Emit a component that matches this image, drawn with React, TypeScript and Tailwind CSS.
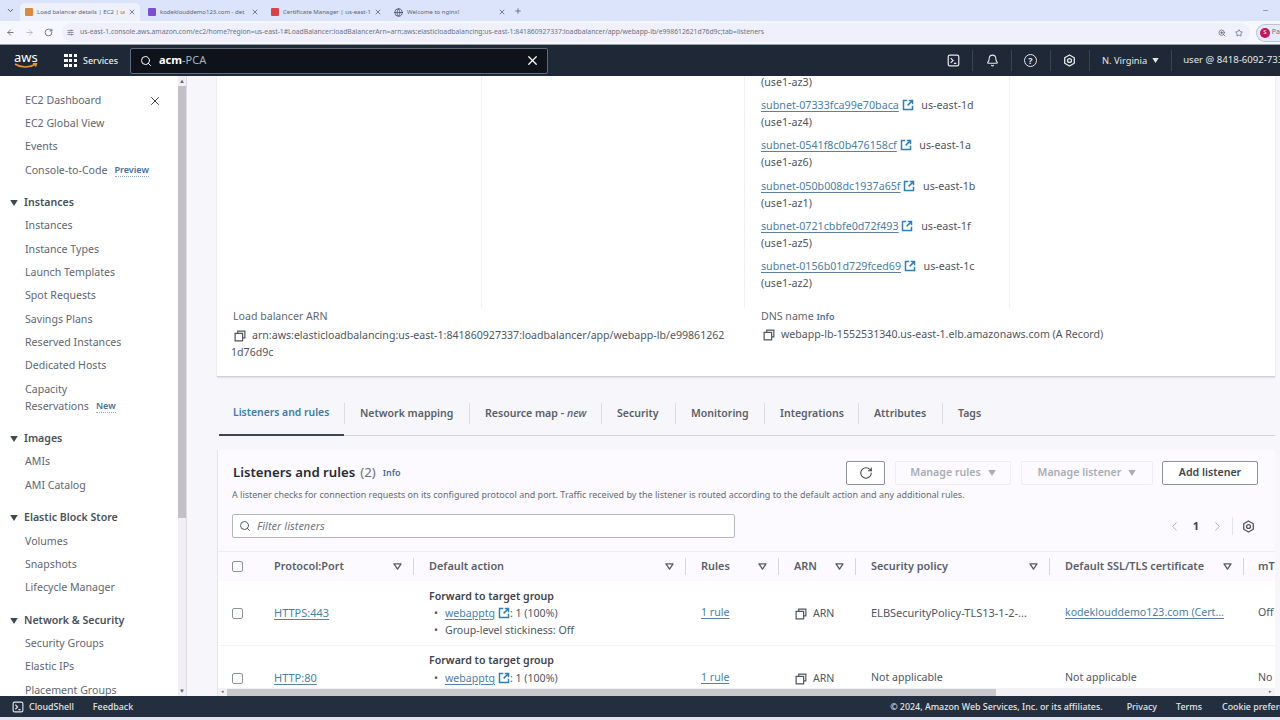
import { ArrowLeft, ArrowRight, RotateCw, X, Plus, Search, Star, ZoomIn, ChevronDown, ChevronLeft, ChevronRight, Globe, Bell, Minus, SlidersHorizontal } from "lucide-react";

const TABS = [
  { title: "Load balancer details | EC2 | us", color: "bg-[#d98a3d]", width: "w-[120px] pl-[5px]", active: true },
  { title: "kodeklouddemo123.com - det", color: "bg-[#7b4fd0]", width: "w-[123px] pl-[8px]" },
  { title: "Certificate Manager | us-east-1", color: "bg-[#d8434a]", width: "w-[123px] pl-[8px]" },
  { title: "Welcome to nginx!", color: "", width: "w-[124px] pl-[8px]", globe: true },
];

const SECTIONS = [
  { items: ["EC2 Dashboard", "EC2 Global View", "Events", "Console-to-Code"] },
  {
    title: "Instances",
    items: ["Instances", "Instance Types", "Launch Templates", "Spot Requests", "Savings Plans", "Reserved Instances", "Dedicated Hosts", "Capacity"],
  },
  { title: "Images", items: ["AMIs", "AMI Catalog"] },
  { title: "Elastic Block Store", items: ["Volumes", "Snapshots", "Lifecycle Manager"] },
  { title: "Network & Security", items: ["Security Groups", "Elastic IPs", "Placement Groups"] },
];

const SUBNETS = [
  { id: "subnet-07333fca99e70baca", zone: "us-east-1d", az: "(use1-az4)" },
  { id: "subnet-0541f8c0b476158cf", zone: "us-east-1a", az: "(use1-az6)" },
  { id: "subnet-050b008dc1937a65f", zone: "us-east-1b", az: "(use1-az1)" },
  { id: "subnet-0721cbbfe0d72f493", zone: "us-east-1f", az: "(use1-az5)" },
  { id: "subnet-0156b01d729fced69", zone: "us-east-1c", az: "(use1-az2)" },
];

const DETAIL_TABS = [
  { label: "Network mapping", width: "w-[125px]" },
  { label: "Resource map", width: "w-[132px]", extra: true },
  { label: "Security", width: "w-[74px]" },
  { label: "Monitoring", width: "w-[89px]" },
  { label: "Integrations", width: "w-[94px]" },
  { label: "Attributes", width: "w-[84px]" },
  { label: "Tags", width: "w-[60px]", last: true },
];

const COLUMNS = ["Protocol:Port", "Default action", "Rules", "ARN", "Security policy", "Default SSL/TLS certificate"];

const GRID = "grid grid-cols-[41px_155px_272px_93px_77px_194px_194px_31px]";

function External() {
  return (
    <svg viewBox="0 0 16 16" className="inline-block w-[12px] h-[12px] align-[-2px] text-[#2f7fb5]" fill="none" stroke="currentColor" strokeWidth="2">
      <path d="M7 2H2v12h12V9" />
      <path d="M9 2h5v5M14 2 7.5 8.5" />
    </svg>
  );
}

function CopyIcon() {
  return (
    <svg viewBox="0 0 16 16" className="inline-block w-[12px] h-[12px] shrink-0 text-[#4f565f]" fill="none" stroke="currentColor" strokeWidth="1.6">
      <path d="M5 4.5V1.5h9.5v9H11.5" />
      <path d="M1.5 4.5h10v10h-10z" />
    </svg>
  );
}

function ShellIcon({ size }: { size: string }) {
  return (
    <svg viewBox="0 0 16 16" className={size} fill="none" stroke="currentColor" strokeWidth="1.5">
      <rect x="1.5" y="1.5" width="13" height="13" rx="2" />
      <path d="m4.5 5 3 3-3 3M8.5 11.5h3" />
    </svg>
  );
}

function GearIcon({ className }: { className: string }) {
  return (
    <svg viewBox="0 0 16 16" className={className} fill="none" stroke="currentColor" strokeWidth="1.6">
      <path d="M8 1.2 13.9 4.600v6.800L8 14.800 2.100 11.400V4.600z" strokeLinejoin="round" />
      <circle cx="8" cy="8" r="2.400" />
    </svg>
  );
}

function SortIcon() {
  return (
    <svg viewBox="0 0 10 8" className="w-[9px] h-[7px] text-[#545b64]" fill="none" stroke="currentColor" strokeWidth="1.500">
      <path d="M1 1h8L5 7z" strokeLinejoin="round" />
    </svg>
  );
}

function Caret({ className }: { className: string }) {
  return (
    <svg viewBox="0 0 10 8" className={className} fill="currentColor">
      <path d="M0 0h10L5 8z" />
    </svg>
  );
}

function Checkbox() {
  return <div className="w-[11px] h-[11px] rounded-[2px] border border-[#8d9299] bg-white" />;
}

function LinkText({ children }: { children: React.ReactNode }) {
  return <span className="text-[#4a7fa6] underline underline-offset-2 decoration-[#5b7f9c]">{children}</span>;
}

function BrowserChrome() {
  return (
    <>
      <div className="h-[21px] bg-[#dbe4fb] flex items-center shrink-0 text-[#4b5563]">
        <div className="w-[20px] flex justify-center">
          <ChevronDown size={9} strokeWidth={2.500} />
        </div>
        {TABS.map((t) => (
          <div
            key={t.title}
            className={`${t.width} h-[18px] mt-[3px] pr-[4px] flex items-center gap-[3px] rounded-t-[5px] ${t.active ? "bg-[#eef1fc]" : ""}`}
          >
            {t.globe ? <Globe size={9} className="text-[#3c4858]" /> : <div className={`w-[8px] h-[8px] rounded-[1px] ${t.color}`} />}
            <span className="flex-1 overflow-hidden whitespace-nowrap text-[6px] text-[#5c6470] ml-[1px]">{t.title}</span>
            <X size={8} strokeWidth={2} className="text-[#3c4858]" />
          </div>
        ))}
        <Plus size={8} strokeWidth={2} className="ml-[4px] text-[#3c4858]" />
        <div className="flex-1" />
        <Minus size={7} className="mr-[11px] text-[#5c6470]" />
      </div>

      <div className="h-[24px] bg-[#f7f8fe] border-b border-[#9aa0ab] flex items-center shrink-0 text-[#4b5563]">
        <div className="w-[62px] flex items-center pl-[6px] gap-[10px]">
          <ArrowLeft size={9} />
          <ArrowRight size={9} className="text-[#a9afba]" />
          <RotateCw size={9} />
        </div>
        <div className="w-[1188px] h-[19px] rounded-full bg-[#eff0fb] flex items-center pl-[4px] pr-[7px]">
          <SlidersHorizontal size={7} className="ml-[1px] mr-[6px]" />
          <span className="flex-1 truncate text-[6.800px] text-[#6b7280]">
            us-east-1.console.aws.amazon.com/ec2/home?region=us-east-1#LoadBalancer:loadBalancerArn=arn:aws:elasticloadbalancing:us-east-1:841860927337:loadbalancer/app/webapp-lb/e998612621d76d9c;tab=listeners
          </span>
          <ZoomIn size={8} className="mr-[9px]" />
          <Star size={8} />
        </div>
        <div className="ml-[6px] h-[18px] flex-1 rounded-l-full border border-r-0 border-[#b9c3d6] bg-[#e6ebf9] flex items-center pl-[3px] gap-[2px]">
          <div className="w-[10px] h-[10px] rounded-full bg-[#c2185b] text-white text-[6px] flex items-center justify-center shrink-0">S</div>
          <span className="text-[7px] text-[#6b7280]">Pa</span>
        </div>
      </div>
    </>
  );
}

function TopNav() {
  return (
    <div className="h-[31px] bg-[#1e2836] flex items-center shrink-0 text-[#e6e8ea] overflow-hidden [&>*]:shrink-0">
      <div className="w-[64px] pl-[14px] flex flex-col">
        <span className="text-[13px] leading-[11px] text-white">aws</span>
        <svg viewBox="0 0 24 6" className="w-[24px] h-[6px] text-[#e8962e]" fill="none" stroke="currentColor" strokeWidth="1.600">
          <path d="M1 1c6 4 14 4 20 .5M19 .8l3.500-.3-1 3" />
        </svg>
      </div>
      <div className="grid grid-cols-3 gap-[1.500px] w-[13px] mr-[6px]">
        {Array.from({ length: 9 }).map((_, i) => (
          <div key={i} className="w-[3.500px] h-[3.500px] bg-white" />
        ))}
      </div>
      <span className="text-[9px] w-[47px] font-medium">Services</span>
      <div className="w-[418px] h-[26px] bg-[#0e131b] border border-[#5f6b7a] rounded-[2px] flex items-center pl-[9px] pr-[7px]">
        <Search size={12} strokeWidth={2} className="text-white mr-[7px]" />
        <span className="flex-1 text-[11px] text-[#aab2bb]">
          <span className="font-bold text-white">acm</span>-PCA
        </span>
        <X size={15} strokeWidth={2} className="text-white" />
      </div>
      <ShellIcon size="w-[13px] h-[13px] ml-[399px]" />
      <div className="w-px h-[21px] bg-[#3a4553] ml-[12px]" />
      <Bell size={13} strokeWidth={2} className="ml-[13px]" />
      <div className="w-px h-[21px] bg-[#3a4553] ml-[12px]" />
      <div className="ml-[12px] w-[13px] h-[13px] rounded-full border-[1.500px] border-[#e6e8ea] flex items-center justify-center text-[9px] font-bold leading-none">?</div>
      <div className="w-px h-[21px] bg-[#3a4553] ml-[13px]" />
      <GearIcon className="w-[13px] h-[13px] ml-[12px]" />
      <div className="w-px h-[21px] bg-[#3a4553] ml-[13px]" />
      <span className="text-[9.300px] ml-[12px] whitespace-nowrap">N. Virginia</span>
      <Caret className="w-[7px] h-[5px] ml-[5px]" />
      <div className="w-px h-[21px] bg-[#3a4553] ml-[12px]" />
      <span className="text-[9.600px] ml-[11px] whitespace-nowrap">user @ 8418-6092-7337</span>
    </div>
  );
}

function Sidebar() {
  return (
    <div className="w-[178px] shrink-0 bg-white pt-[13px] overflow-hidden text-[10.600px] text-[#5f6670]">
      {SECTIONS.map((s, si) => (
        <div key={si} className={s.title ? "mt-[9px]" : ""}>
          {s.title && (
            <div className="h-[23.600px] flex items-center pl-[10px] gap-[6px] font-semibold text-[#4a5058]">
              <Caret className="w-[8px] h-[6px] text-[#414750]" />
              {s.title}
            </div>
          )}
          {s.items.map((item, i) => (
            <div key={item} className="h-[23.300px] flex items-center pl-[25px] pr-[16px] whitespace-nowrap">
              <span>{item}</span>
              {item === "Console-to-Code" && <span className="ml-[7px] text-[9px] font-semibold text-[#47709c] border-b border-dotted border-[#8fa9c2] leading-[12px]">Preview</span>}
              {si === 0 && i === 0 && <X size={14} strokeWidth={1.600} className="ml-auto text-[#2e343b]" />}
            </div>
          ))}
          {s.title === "Instances" && (
            <div className="h-[20px] pb-[3px] flex items-center pl-[25px] -mt-[3px] whitespace-nowrap">
              <span>Reservations</span>
              <span className="ml-[7px] text-[9px] font-semibold text-[#47709c] border-b border-dotted border-[#8fa9c2] leading-[12px]">New</span>
            </div>
          )}
        </div>
      ))}
    </div>
  );
}

function SideScrollbar() {
  return (
    <div className="w-[9px] shrink-0 bg-[#f1eff5] border-r border-[#dcdce2] flex flex-col items-center text-[#666]">
      <div className="h-[10px] text-[6px] leading-[10px]">▲</div>
      <div className="w-[8px] h-[432px] bg-[#c3c1c7]" />
      <div className="flex-1" />
      <div className="h-[10px] text-[6px] leading-[10px]">▼</div>
    </div>
  );
}

function DetailsCard() {
  return (
    <div className="h-[301px] shrink-0 bg-white border-b border-[#cfd0d6] shadow-[0_1px_2px_rgba(0,0,0,0.1)] text-[10.700px] text-[#4f565f] overflow-hidden">
      <div className="h-[232px] grid grid-cols-[265px_263px_265px_1fr]">
        <div className="border-r border-[#f1f1f3]" />
        <div className="border-r border-[#f1f1f3]" />
        <div className="border-r border-[#f1f1f3] pl-[16px] -mt-[2px] leading-[17px]">
          <div className="mb-[6px]">(use1-az3)</div>
          {SUBNETS.map((s) => (
            <div key={s.id} className="mb-[6.300px] whitespace-nowrap">
              <div>
                <LinkText>{s.id}</LinkText> <External /> <span className="ml-[5px]">{s.zone}</span>
              </div>
              <div>{s.az}</div>
            </div>
          ))}
        </div>
        <div />
      </div>
      <div className="grid grid-cols-[528px_1fr] leading-[17px] text-[10.600px]">
        <div className="pl-[14px] pr-[10px]">
          <div className="pl-[2px] text-[#5f6670] mb-[1.500px]">Load balancer ARN</div>
          <div className="whitespace-nowrap">
            <span className="ml-[3px] mr-[6px]">
              <CopyIcon />
            </span>
            arn:aws:elasticloadbalancing:us-east-1:841860927337:loadbalancer/app/webapp-lb/e99861262
            <br />
            1d76d9c
          </div>
        </div>
        <div className="pl-[16px]">
          <div className="text-[#5f6670] mb-[1px]">
            DNS name <span className="text-[9px] font-semibold text-[#47709c]">Info</span>
          </div>
          <div className="flex items-center whitespace-nowrap">
            <span className="ml-[2px] mr-[6px] flex">
              <CopyIcon />
            </span>
            webapp-lb-1552531340.us-east-1.elb.amazonaws.com (A Record)
          </div>
        </div>
      </div>
    </div>
  );
}

function DetailTabs() {
  return (
    <div className="h-[46px] mt-[13px] ml-[2px] shrink-0 flex items-center border-b border-[#d5d5da] text-[10.550px] font-semibold text-[#5a6068]">
      <div className="w-[125px] h-[46px] flex items-center pl-[14px] pt-[2px] text-[10.400px] text-[#3d7ca8] border-b-2 border-[#3f4650] -mb-px">Listeners and rules</div>
      <div className="w-px h-[21px] mt-[2px] bg-[#dcdce2]" />
      {DETAIL_TABS.map((t) => (
        <div key={t.label} className={`${t.width} h-[21px] mt-[2px] flex items-center pl-[15px] whitespace-nowrap ${t.last ? "" : "border-r border-[#dcdce2]"}`}>
          {t.label}
          {t.extra && (
            <span className="ml-[3px]">
              - <em className="font-medium">new</em>
            </span>
          )}
        </div>
      ))}
    </div>
  );
}

function ToolButton({ children, className }: { children: React.ReactNode; className: string }) {
  return <div className={`h-[24px] flex items-center justify-center rounded-[2px] text-[10.600px] font-semibold ${className}`}>{children}</div>;
}

function ListenersCard() {
  return (
    <div className="flex-1 min-h-0 mt-[14px] bg-[#fcfaff] border-l border-[#e6e4ea] flex flex-col overflow-hidden text-[10.600px] text-[#4f565f]">
      <div className="flex items-start pt-[11px] pl-[15px] pr-[17px] h-[36px] shrink-0">
        <div className="flex-1 flex items-center h-[23px]">
          <span className="text-[13.200px] font-semibold text-[#262b31]">Listeners and rules</span>
          <span className="text-[13.200px] text-[#6c727a] ml-[5px]">(2)</span>
          <span className="text-[9px] font-semibold text-[#47709c] ml-[7px]">Info</span>
        </div>
        <ToolButton className="w-[39px] border border-[#8d9299] bg-white text-[#3e444c]">
          <RotateCw size={14} strokeWidth={1.800} />
        </ToolButton>
        <ToolButton className="w-[116px] ml-[10px] border border-[#eeedf1] text-[#a8adb4] gap-[7px]">
          Manage rules <Caret className="w-[8px] h-[6px]" />
        </ToolButton>
        <ToolButton className="w-[132px] ml-[10px] border border-[#eeedf1] text-[#a8adb4] gap-[7px]">
          Manage listener <Caret className="w-[8px] h-[6px]" />
        </ToolButton>
        <ToolButton className="w-[96px] ml-[9px] border border-[#8d9299] bg-white text-[#3e444c]">Add listener</ToolButton>
      </div>

      <div className="pl-[14px] h-[18px] shrink-0 flex items-center text-[9px] text-[#666c74] whitespace-nowrap">
        A listener checks for connection requests on its configured protocol and port. Traffic received by the listener is routed according to the default action and any additional rules.
      </div>

      <div className="mt-[10px] h-[24px] shrink-0 flex items-center pl-[14px] pr-[20px]">
        <div className="w-[503px] h-[24px] bg-white border border-[#b4b7bd] rounded-[2px] flex items-center pl-[6px] gap-[6px]">
          <Search size={12} strokeWidth={2} className="text-[#555b63]" />
          <span className="italic text-[11px] text-[#71777f]">Filter listeners</span>
        </div>
        <div className="flex-1" />
        <ChevronLeft size={15} strokeWidth={1.500} className="text-[#a8adb4]" />
        <span className="mx-[11px] text-[11px] font-bold text-[#3e444c]">1</span>
        <ChevronRight size={15} strokeWidth={1.500} className="text-[#a8adb4]" />
        <div className="w-px h-[18px] bg-[#e4e2e8] ml-[7px] mr-[9px]" />
        <GearIcon className="w-[13px] h-[13px] text-[#4f565f]" />
      </div>

      <div className="flex-1 min-h-0 mt-[13px] overflow-hidden border-t border-[#eeedf1]">
        <div className={`${GRID} h-[29px] items-center font-semibold text-[10.900px] text-[#5a6068] bg-[#fcfaff]`}>
          <div className="pl-[14px]">
            <Checkbox />
          </div>
          {COLUMNS.map((c) => (
            <div key={c} className="h-[17px] pl-[15px] pr-[11px] flex items-center justify-between border-r border-[#d5d5da] whitespace-nowrap">
              {c}
              <SortIcon />
            </div>
          ))}
          <div className="pl-[14px] whitespace-nowrap overflow-hidden">mTLS</div>
        </div>

        <div className={`${GRID} h-[65px] items-center bg-white border-b border-[#f4f3f6]`}>
          <div className="pl-[14px]">
            <Checkbox />
          </div>
          <div className="pl-[15px] text-[11px]">
            <LinkText>HTTPS:443</LinkText>
          </div>
          <div className="pl-[15px] leading-[17px]">
            <div className="font-semibold text-[#3e444c]">Forward to target group</div>
            <div className="pl-[5px]">
              <span className="mr-[7px]">•</span>
              <LinkText>webapptg</LinkText> <External />: 1 (100%)
            </div>
            <div className="pl-[5px]">
              <span className="mr-[7px]">•</span>Group-level stickiness: Off
            </div>
          </div>
          <div className="pl-[15px]">
            <LinkText>1 rule</LinkText>
          </div>
          <div className="pl-[16px] pt-[2px] flex items-center gap-[6px]">
            <CopyIcon /> ARN
          </div>
          <div className="pl-[15px] text-[11px] whitespace-nowrap">ELBSecurityPolicy-TLS13-1-2-...</div>
          <div className="pl-[15px] whitespace-nowrap">
            <LinkText>kodeklouddemo123.com (Cert...</LinkText>
          </div>
          <div className="pl-[14px]">Off</div>
        </div>

        <div className={`${GRID} h-[65px] items-start bg-white`}>
          <div className="pl-[14px] pt-[27px]">
            <Checkbox />
          </div>
          <div className="pl-[15px] pt-[23px] text-[11px] leading-[17px]">
            <LinkText>HTTP:80</LinkText>
          </div>
          <div className="pl-[15px] pt-[6px] leading-[17px]">
            <div className="font-semibold text-[#3e444c] mb-[1px]">Forward to target group</div>
            <div className="pl-[5px]">
              <span className="mr-[7px]">•</span>
              <LinkText>webapptg</LinkText> <External />: 1 (100%)
            </div>
          </div>
          <div className="pl-[15px] pt-[23px] leading-[17px]">
            <LinkText>1 rule</LinkText>
          </div>
          <div className="pl-[16px] pt-[24px] leading-[17px] flex items-center gap-[6px]">
            <CopyIcon /> ARN
          </div>
          <div className="pl-[15px] pt-[23px] leading-[17px] whitespace-nowrap">Not applicable</div>
          <div className="pl-[15px] pt-[23px] leading-[17px] whitespace-nowrap">Not applicable</div>
          <div className="pl-[14px] pt-[23px] leading-[17px]">No</div>
        </div>
      </div>

      <div className="h-[8px] shrink-0 bg-[#f3f1f6] flex items-center text-[#666]">
        <div className="w-[9px] text-[5px] text-center">◂</div>
        <div className="w-[769px] h-[7px] bg-[#c9c8cc]" />
        <div className="flex-1" />
        <div className="w-[9px] text-[5px] text-center">▸</div>
      </div>
    </div>
  );
}

function Footer() {
  return (
    <>
      <div className="h-[21px] shrink-0 bg-[#232f3e] flex items-center text-[8.900px] font-medium text-[#e3e5e8] whitespace-nowrap overflow-hidden">
        <ShellIcon size="w-[12px] h-[12px] ml-[12px]" />
        <span className="ml-[5px]">CloudShell</span>
        <span className="ml-[19px]">Feedback</span>
        <div className="flex-1" />
        <span>© 2024, Amazon Web Services, Inc. or its affiliates.</span>
        <span className="ml-[24px]">Privacy</span>
        <span className="ml-[19px]">Terms</span>
        <span className="ml-[20px] w-[58px] shrink-0 overflow-hidden">Cookie preferences</span>
      </div>
      <div className="h-[3px] shrink-0 bg-[#dfe4ee]" />
    </>
  );
}

export default function App() {
  return (
    <div className="w-[1280px] h-[720px] overflow-hidden flex flex-col bg-white font-['Noto_Sans','Open_Sans',sans-serif]">
      <BrowserChrome />
      <TopNav />
      <div className="flex-1 min-h-0 flex">
        <Sidebar />
        <SideScrollbar />
        <div className="flex-1 min-w-0 bg-[#f7f6fa] pl-[30px] pr-[5px] flex flex-col overflow-hidden">
          <DetailsCard />
          <DetailTabs />
          <ListenersCard />
        </div>
      </div>
      <Footer />
    </div>
  );
}
